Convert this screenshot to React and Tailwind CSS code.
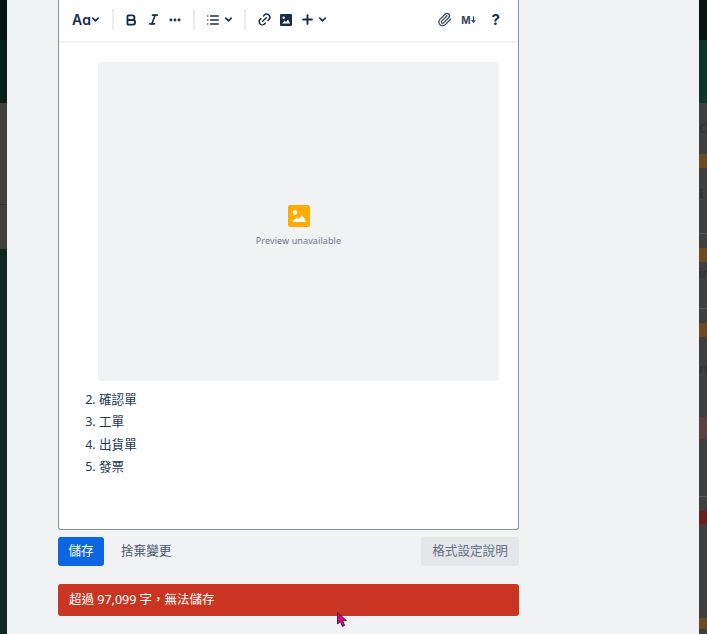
import React from 'react';
import { Bold, ChevronDown, Ellipsis, Italic, Link2, List, Paperclip, Plus } from 'lucide-react';

function Sep({ className }) {
    return <div className={`w-[2px] h-[21px] bg-[#ebecf0] ${className}`}></div>
}

function Chevron({ className }) {
    return <ChevronDown size={11} strokeWidth={3.4} className={className} />
}

function Toolbar() {
    return (
        <div className="h-[43px] border-b-2 border-[#f1f2f4] flex items-center pl-[13px] pr-[18px] pb-[2px] text-[#172b4d]">
            <span className="font-['Inter'] font-semibold text-[14px] leading-none w-[18px]">Aɑ</span>
            <Chevron />
            <Sep className="ml-[11px]" />
            <Bold size={14} strokeWidth={3.2} className="ml-[10px]" />
            <Italic size={13} strokeWidth={3} className="ml-[9px]" />
            <Ellipsis size={14} strokeWidth={3} className="ml-[8px]" />
            <Sep className="ml-[11px]" />
            <List size={14} strokeWidth={2.6} className="ml-[11px]" />
            <Chevron className="ml-[3px]" />
            <Sep className="ml-[10px]" />
            <Link2 size={15} strokeWidth={2.4} className="ml-[11px] -rotate-45" />
            <svg width="12" height="12" viewBox="0 0 12 12" className="ml-[8px]">
                <rect width="12" height="12" rx="1.2" fill="#172b4d" />
                <circle cx="3.6" cy="3.8" r="1.2" fill="#fff" />
                <path d="M2 9.6 L4.8 6.8 L6 8 L8 5.6 L10 9.6 Z" fill="#fff" />
            </svg>
            <Plus size={15} strokeWidth={3} className="ml-[8px]" />
            <Chevron className="ml-[2px]" />
            <div className="flex-1"></div>
            <Paperclip size={15} strokeWidth={2} className="text-[#344563]" />
            <span className="ml-[9px] flex items-center font-['Inter'] font-bold text-[10px] leading-none text-[#344563]">
                M
                <svg width="5" height="9" viewBox="0 0 6 9">
                    <path d="M3 0.5 V7.5 M0.8 5.2 L3 7.8 L5.2 5.2" fill="none" stroke="#344563" strokeWidth="1.4" />
                </svg>
            </span>
            <span className="ml-[16px] font-['Inter'] font-bold text-[15px] leading-none">?</span>
        </div>
    )
}

function Preview() {
    return (
        <div className="ml-[39px] mt-[19px] w-[401px] h-[319px] bg-[#f1f2f4] rounded-[3px] flex flex-col items-center pt-[143px]">
            <svg width="22" height="22" viewBox="0 0 22 22">
                <rect width="22" height="22" rx="2.5" fill="#ffab00" />
                <circle cx="7" cy="7.5" r="2.2" fill="#fff" />
                <path d="M4 17 L8.5 12.5 L10.5 14 L14 10 L18.5 17 Z" fill="#fff" />
            </svg>
            <p className="mt-[7px] text-[9px] leading-[14px] tracking-[0.1px] text-[#6b778c]">Preview unavailable</p>
        </div>
    )
}

function Strip({ rows, className }) {
    return (
        <div className={`overflow-hidden bg-[#3f3f3f] ${className}`}>
            {rows.map((row, index) => (
                <div
                    key={index}
                    className={`overflow-hidden whitespace-nowrap text-[13px] text-[#2b3030] flex items-center ${row.c}`}
                    style={{ height: row.h }}
                >
                    {row.t}
                </div>
            ))}
        </div>
    )
}

const leftRows = [
    { h: 40, c: 'bg-[#07140f]', t: '' },
    { h: 63, c: 'bg-[#0b2019]', t: '' },
    { h: 43, c: 'bg-[#403f3e]', t: '' },
    { h: 58, c: 'bg-[#403f3e]', t: '' },
    { h: 45, c: 'bg-[#403f3e] border-t border-[#333]', t: '' },
    { h: 385, c: 'bg-[#0e2820]', t: '' },
]

const rightRows = [
    { h: 40, c: 'bg-[#07140f]', t: '' },
    { h: 63, c: 'bg-[#10352b]', t: '' },
    { h: 51, c: 'bg-[#3f3f3f]', t: 'CH' },
    { h: 14, c: 'bg-[#6d4a22]', t: '' },
    { h: 65, c: 'bg-[#3f3f3f] pb-[14px]', t: 'I' },
    { h: 1, c: 'bg-[#5a5a5a]', t: '' },
    { h: 14, c: 'bg-[#3f3f3f]', t: '' },
    { h: 14, c: 'bg-[#6d4a22]', t: '' },
    { h: 46, c: 'bg-[#3f3f3f] pb-[22px]', t: 'in' },
    { h: 1, c: 'bg-[#5a5a5a]', t: '' },
    { h: 14, c: 'bg-[#3f3f3f]', t: '' },
    { h: 14, c: 'bg-[#6d4a22]', t: '' },
    { h: 80, c: 'bg-[#3f3f3f] pb-[16px]', t: 'ro' },
    { h: 22, c: 'bg-[#5c3f3e]', t: '' },
    { h: 57, c: 'bg-[#3f3f3f]', t: '' },
    { h: 1, c: 'bg-[#5a5a5a]', t: '' },
    { h: 14, c: 'bg-[#3f3f3f]', t: '' },
    { h: 13, c: 'bg-[#6b2019]', t: '' },
    { h: 80, c: 'bg-[#3f3f3f]', t: '' },
    { h: 14, c: 'bg-[#3f3f3f]', t: '' },
    { h: 11, c: 'bg-[#6d4a22]', t: '' },
    { h: 5, c: 'bg-[#3f3f3f]', t: '' },
]

function App() {
    return (
        <div lang="zh-TW" className="w-[707px] h-[634px] overflow-hidden flex relative font-['Noto_Sans','Noto_Sans_CJK_TC',sans-serif]">
            <Strip rows={leftRows} className="w-[7px] shrink-0" />

            <main className="flex-1 bg-[#f1f2f4] pl-[51px]">
                <div className="w-[461px] h-[530px] bg-white border border-t-0 border-[#8590a2] rounded-b-[3px]">
                    <Toolbar />
                    <Preview />
                    <ol start={2} className="list-decimal mt-[8px] pl-[40px] text-[12.6px] leading-[22.4px] text-[#253858]">
                        <li>確認單</li>
                        <li>工單</li>
                        <li>出貨單</li>
                        <li>發票</li>
                    </ol>
                </div>

                <div className="w-[461px] mt-[7px] flex items-center text-[12.6px]">
                    <button className="w-[46px] h-[29px] bg-[#0c66e4] text-white rounded-[3px]">儲存</button>
                    <button className="ml-[17px] text-[#44546f]">捨棄變更</button>
                    <button className="ml-auto w-[98px] h-[29px] bg-[#e4e6ea] text-[#626f86] rounded-[3px]">格式設定說明</button>
                </div>

                <div className="w-[461px] h-[32px] mt-[18px] px-[11px] bg-[#ca3521] text-white text-[12.5px] rounded-[3px] flex items-center">
                    超過 97,099 字，無法儲存
                </div>
            </main>

            <Strip rows={rightRows} className="w-[8px] shrink-0" />

            <svg width="11" height="16" viewBox="0 0 11 16" className="absolute left-[337px] top-[612px]">
                <path d="M0.5 0.5 L0.5 12 L3.4 9.6 L5.4 14.4 L7.6 13.4 L5.6 8.8 L9.4 8.6 Z" fill="#e6008a" stroke="#111" strokeWidth="0.8" />
            </svg>
        </div>
    )
}

export default App
